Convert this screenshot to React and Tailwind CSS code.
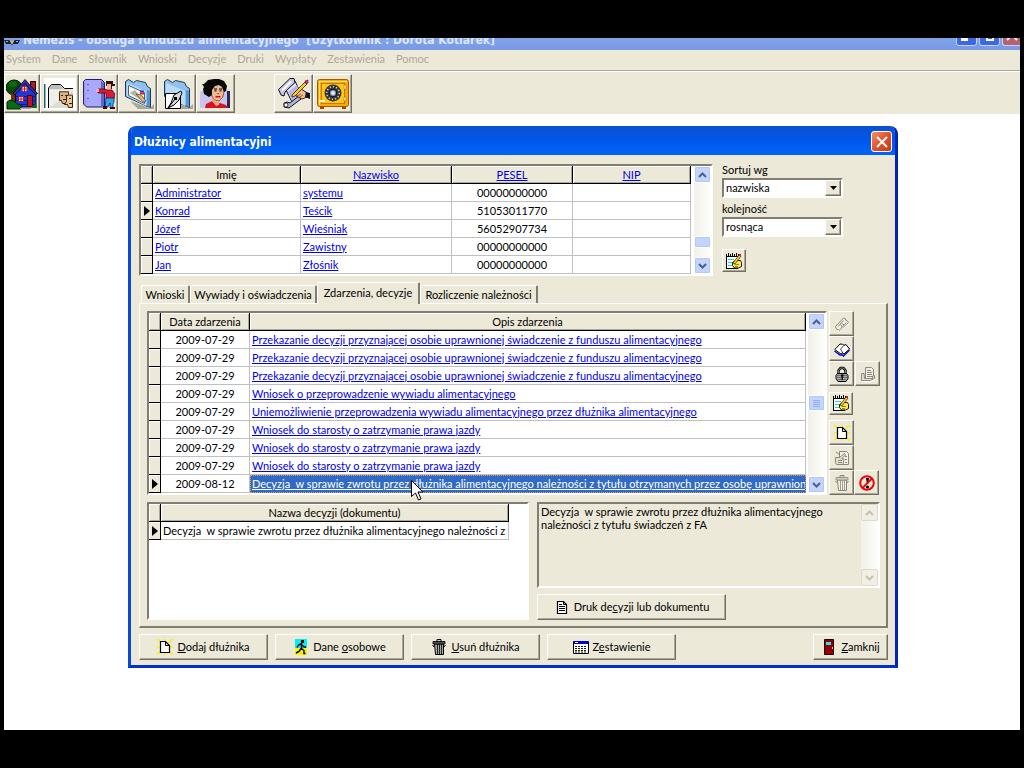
import React from "react";

const RAISED =
  "border border-t-white border-l-white border-r-[#716f64] border-b-[#716f64] shadow-[inset_-1px_-1px_0_#aca899] bg-[#ece9d8]";
const SUNKEN =
  "border-2 border-t-[#807d72] border-l-[#807d72] border-r-white border-b-white";

/* ---------- toolbar drawings (32 x 32) ---------- */

function Big({ children }) {
  return (
    <svg viewBox="0 0 32 32" className="size-8 shrink-0" aria-hidden="true">
      {children}
    </svg>
  );
}

const HouseIcon = () => (
  <Big>
    <ellipse cx="8" cy="9.500" rx="8" ry="7.500" fill="#064806" stroke="#001800" />
    <ellipse cx="7" cy="6" rx="4" ry="3" fill="#0c6a10" />
    <path d="M5 15h4v10H5z" fill="#7a2a10" />
    <path d="M24.500 3.500h5v9h-5z" fill="#c01818" stroke="#000" />
    <path d="M9.500 14.500L19 3l11 11.500V29H9.500z" fill="#1838e0" stroke="#000" />
    <path d="M10 18.500h19M10 22.500h19M10 26.500h19" stroke="#0818a0" />
    <path d="M7 15.500L19 1.500l12.500 14-2 1L19 5.500 9 17z" fill="#3a2ab0" stroke="#000" strokeWidth=".8" />
    <circle cx="18.500" cy="11" r="3" fill="#fff" stroke="#b01020" />
    <path d="M15.500 11h6M18.500 8v6" stroke="#b01020" />
    <path d="M12.500 18.500h5v5h-5z" fill="#fff" stroke="#b01020" />
    <path d="M15 18.500v5M12.500 21h5" stroke="#b01020" />
    <path d="M21.500 17.500h5v11h-5z" fill="#c01020" stroke="#400" />
    <path d="M1 24l3-2 4 1 3 3 4 1v4H1z" fill="#0a6a14" stroke="#002800" />
    <path d="M26 28l4-2 1 4h-5z" fill="#0a6a14" />
    <path d="M14 30h11v1H14z" fill="#aaa" />
  </Big>
);

const FacesIcon = () => (
  <Big>
    <path d="M0 0h32v32H0z" fill="#fff" />
    <path d="M0 6h1.500v24H0z" fill="#206080" />
    <path d="M4.500 30V10l3-3.500h9l4 4H29" fill="#e4e4e0" stroke="#000" />
    <path d="M8 7h8l3 4H5z" fill="#bdbdb8" />
    <path d="M5 12h24v18H5z" fill="#eeeeea" />
    <path d="M5 30L29 12v18z" fill="#dcdcd6" />
    <path d="M15.500 13.500h9v10l-2 2h-4l-1-3h-2z" fill="#d9b484" stroke="#3a2008" />
    <path d="M22.500 17.500h6v12h-4l-1-3h-3l2-3z" fill="#e7c49a" stroke="#3a2008" />
    <path d="M15 13h10v1.500H15zM24 16.500h5V18h-5z" fill="#806040" />
    <path d="M17 17h2v1h-2zM21 17h2v1h-2zM19 21h3v1h-3zM25 20h2v1h-2zM25 25h3v1h-3z" fill="#402010" />
  </Big>
);

const PersonIcon = () => (
  <Big>
    <path d="M.5 3.500l2-2h16l3 3V29H3.500l-3-3z" fill="#9a9af4" stroke="#202070" />
    <path d="M2 2h16v26H3z" fill="#a8a8ff" />
    <path d="M18 2l3 3v24h-3z" fill="#6464cc" />
    <path d="M4 6h2v1H4zM4 12h2v1H4zM4 20h2v1H4z" fill="#6060c0" />
    <path d="M23 3h7v3h2v2h-3v3h-5V8h-1z" fill="#301008" />
    <path d="M24 6h4v5h-4z" fill="#f0b890" />
    <path d="M15 11h7l2 1h5l3 4-1 5h-8v-6h-8z" fill="#e01838" stroke="#300" strokeWidth=".7" />
    <path d="M13 11h3v3h-3z" fill="#f0b890" />
    <path d="M23 20h8v4l-1 2v4h-3v-5l-2 4h-3z" fill="#30a8f0" stroke="#001050" strokeWidth=".7" />
    <path d="M20 28h4v3h-4zM27 29h5v2h-5z" fill="#400810" />
  </Big>
);

const folderBase = (
  <>
    <path d="M8 23l20 7 4-4v5H16z" fill="#aaa79a" />
    <path d="M3.500 3.500l3-2 5 3 3-2 9 2 2 4 3 2v19l-3-1-22-10z" fill="#8fc0ee" stroke="#203858" />
    <path d="M5 5l19 8v15L5 18z" fill="#b8dcfa" />
    <path d="M25 12l3 1v16l-3-1z" fill="#5a94d0" />
  </>
);

const PhotoFolderIcon = () => (
  <Big>
    {folderBase}
    <path d="M6.500 7.500l16 7v11l-16-8z" fill="#f4f4ee" stroke="#506078" />
    <path d="M8 15l5-3 4 5 5 2v5z" fill="#a8b8a0" />
    <path d="M14 16l5 1 5 6-3 1z" fill="#e8b080" stroke="#603010" strokeWidth=".6" />
    <path d="M18 12.500h4v2h-4z" fill="#2040d0" />
    <path d="M18 14.500h4v2h-4z" fill="#e02020" />
  </Big>
);

const PenFolderIcon = () => (
  <Big>
    {folderBase}
    <path d="M4.500 15.500h15v15h-15z" fill="#fff" stroke="#000" />
    <path d="M20 13l-7 4-3 8-3 5 6-3 5-5 3-7z" fill="#d8d8d8" stroke="#000" />
    <path d="M7 30l7-9" stroke="#000" />
    <path d="M13 19h3v3h-3z" fill="#000" />
  </Big>
);

const WomanIcon = () => (
  <Big>
    <path d="M0 14l3-2h25v18H0z" fill="#c8c4ee" />
    <path d="M27 13h3v17h-3z" fill="#282858" />
    <path d="M12 6l9-1 3 8-1 6-4 4-5-1-4-8z" fill="#f4b888" stroke="#502010" strokeWidth=".6" />
    <path d="M4 6l4-4 6-1 5 0 5 2 3 5-1 5-2 1-2-5-3-2-4 1-3 4 0 5-3 2-5-3-1-5 1-2-2-3z" fill="#080808" />
    <path d="M14 10.500h3v1h-3zM19 10.500h3v1h-3z" fill="#000" />
    <path d="M14.500 12h2v1.500h-2zM19.500 12h2v1.500h-2z" fill="#204080" />
    <path d="M17.500 15h1.500v1h-1.500z" fill="#a04020" />
    <path d="M15.500 18h5v1.500h-5z" fill="#d01020" />
    <path d="M5 30l1-4 6-3 4 4 4-2 6 2 2 3z" fill="#d81020" />
    <path d="M12 19l2 3 5 2v3l-3 1-4-5z" fill="#f0a878" />
  </Big>
);

const ScrollIcon = () => (
  <Big>
    <path d="M8 12l9-9 7 15-9 8z" fill="#e4e4fc" stroke="#101018" />
    <path d="M10 14l9-7 4 10-8 7z" fill="#b4b4ee" />
    <path d="M.5 11.500L12 .5h4l1 4L7 14l-1 4-3-1z" fill="#c4c4e8" stroke="#101018" />
    <path d="M3 12l9-9 2 1-9 9z" fill="#fff" />
    <path d="M6 25l3-1 3 1 10-8 1 4-12 9-5-1z" fill="#b4b4d8" stroke="#101018" />
    <circle cx="8" cy="27" r="2" fill="#fff" stroke="#101018" strokeWidth=".8" />
    <path d="M17 14l4-4 7 4 1 5-5 2-6-3z" fill="#f2bd93" stroke="#402010" />
    <path d="M28 14l4 1v6l-5-2z" fill="#101028" />
    <path d="M14 17L27 4l2 2-12 12-3 1z" fill="#f4d020" stroke="#302000" strokeWidth=".8" />
    <path d="M27 3l3-1v3l-2 1z" fill="#e828b8" stroke="#400030" strokeWidth=".6" />
    <path d="M19 18l4-2M20 20l5-3" stroke="#803818" strokeWidth=".8" />
  </Big>
);

const SafeIcon = () => (
  <Big>
    <path d="M3 28h4v3H3zM25 28h4v3h-4z" fill="#a04808" />
    <rect x="0.5" y="1.5" width="31" height="27" rx="2" fill="#f8a808" stroke="#a85800" />
    <path d="M2 3h28v1H3v23H2z" fill="#ffe868" />
    <rect x="4.5" y="5.5" width="23" height="20" fill="#ffc818" stroke="#c87808" />
    <path d="M27 7h2v4h-2zM27 19h2v4h-2z" fill="#fff4b0" stroke="#a06000" strokeWidth=".5" />
    <path d="M2 22h6v2H2z" fill="#fff8c8" />
    <circle cx="16" cy="15" r="8.5" fill="#383838" />
    <circle cx="16" cy="15" r="6.3" fill="none" stroke="#c8c8c8" strokeWidth="1.6" strokeDasharray="1.2 2" />
    <circle cx="16" cy="15" r="3.8" fill="#8888a8" stroke="#101010" />
    <circle cx="16" cy="15" r="2" fill="#e8e8ff" />
  </Big>
);

/* ---------- small drawings (16 x 16) ---------- */

function Small({ children }) {
  return (
    <svg viewBox="0 0 16 16" className="size-4 shrink-0" fill="none" aria-hidden="true">
      {children}
    </svg>
  );
}

const NotepadIcon = () => (
  <Small>
    <path d="M1 3h12v12H1z" fill="#fff" />
    <path d="M0 1h1v3H0zM2 0h1v3H2zM4 1h1v3H4zM6 0h1v3H6zM8 1h1v3H8zM10 0h1v3h-1zM12 1h1v3h-1z" fill="#000" />
    <path d="M0 3h13v1H0zM0 3h1v12H0zM0 15h12v1H0z" fill="#000" />
    <path d="M2 6h6v1H2zM2 9h4v1H2zM2 12h4v1H2z" fill="#20d0e0" />
    <path d="M6.500 9.500l3-2h5l1 2v4l-3 1.500h-4l-2-2.500z" fill="#ffe850" stroke="#201800" />
    <path d="M7 10l6-8 2 1-6 8z" fill="#f8d820" stroke="#302000" strokeWidth=".7" />
    <path d="M13 1h2v2h-2z" fill="#e02020" />
    <path d="M9 11.500h4M9 13.500h3" stroke="#807000" strokeWidth=".8" />
  </Small>
);

const TicketIcon = () => (
  <Small>
    <path d="M1.500 10.500l8-8.500 1.500.5.500 1.500 1.500.500 1.500 2-8.500 8-1.500-1-1.500 0-1-1.500z" fill="#f4f2e8" stroke="#8c897c" />
    <path d="M4 10.500l5.500-6M6.500 12.500l6-6M7.500 7l2.500 2M6 8.500l2.500 2" stroke="#8c897c" />
    <path d="M6 15.500l9.500-9" stroke="#fff" />
  </Small>
);

const BookIcon = () => (
  <Small>
    <path d="M.5 10l5.500 4h2.500l1 1L15.500 9" stroke="#0000c8" strokeWidth="1.400" />
    <path d="M.8 8.500L6 3l2.500.3 1.500 1L12 3.500l3.500 4.500-5.500 5-1.200-.8-2.500.3z" fill="#fff" stroke="#000" />
    <path d="M10 4.300L6.500 8l2.300 4" stroke="#000" strokeWidth=".7" />
  </Small>
);

const LockIcon = () => (
  <Small>
    <path d="M4.500 8V4.500l2-2.500h3l2 2.500V8" stroke="#000" strokeWidth="2.400" />
    <path d="M4.500 8V4.500l2-2.500h3l2 2.500V8" stroke="#c0c0c0" strokeWidth=".7" />
    <path d="M3.500 7.500h9l1.500 2v3l-2 3H4l-2-3v-3z" fill="#a8a8a8" stroke="#000" />
    <path d="M3 9.500h10M3 11.500h10M4 13.500h8" stroke="#606060" strokeWidth=".8" />
    <path d="M7 8.500h2.500v2h-.7V14H7.500v-3.500H7z" fill="#000" />
  </Small>
);

const PrintedPagesIcon = () => (
  <Small>
    <path d="M5.500 1.500h6l2 2v9h-8z" fill="#f4f2e8" stroke="#8c897c" />
    <path d="M7 4.500h4M7 6.500h5M7 8.500h5M7 10.500h5" stroke="#8c897c" />
    <path d="M4 7.500H1.500v7h9l4-2v-3l-2 .5v2.500H4.500z" fill="#e4e1d0" stroke="#8c897c" />
    <path d="M2 15.500h9l4-2" stroke="#fff" />
  </Small>
);

const NewIcon = () => (
  <Small>
    <path d="M0 0l5 4M8 0v3M16 0l-5 4M0 15l4-3M8 16v-3M16 16l-4-4M0 8h3M13 8h3" stroke="#ffee00" strokeWidth="1.6" />
    <path d="M3.500 2.500h5l4 4v7h-9z" fill="#fff" stroke="#000" strokeWidth="1.2" />
    <path d="M8.500 2.500v4h4" stroke="#000" />
  </Small>
);

const EditPageIcon = () => (
  <Small>
    <path d="M5.500 1.500h7l2 2v11h-9z" fill="#f4f2e8" stroke="#8c897c" />
    <path d="M11 6.500h2M11 9.500h2M11 12.500h2" stroke="#8c897c" />
    <path d="M1.500 7.500h4l5-4 1 1.500-4 4h2.500l-1 5.500H2.500l-1-2z" fill="#e4e1d0" stroke="#8c897c" />
    <path d="M2 2l4 3M4 10.500h4M4 12.500h4" stroke="#8c897c" />
  </Small>
);

const TrashIcon = ({ off }) => {
  const ink = off ? "#8c897c" : "#000";
  return (
    <Small>
      <path d="M3.500 5h9v10.500h-8z" fill={off ? "#f4f2e8" : "#a8a8a8"} stroke={ink} />
      <path d="M6.500 5v10M8.500 5v10M10.500 5v10" stroke={ink} strokeWidth=".8" />
      <path d="M6 .5h4V3H6z" fill="#d8d8d8" stroke={ink} />
      <path d="M2 2.500h12V5H2z" fill={off ? "#d0cdbf" : "#505050"} stroke={ink} strokeWidth=".8" />
      <path d="M1.500 6l1.500 2M14.500 6L13 8" stroke={ink} />
    </Small>
  );
};

const ForbiddenIcon = () => (
  <Small>
    <path d="M7 3h3l-1 6H8z" fill="#000" />
    <circle cx="8.500" cy="12" r="1.500" fill="#000" />
    <circle cx="8" cy="8" r="6.800" stroke="#e80808" strokeWidth="2" />
    <path d="M13 3.500L3.500 13" stroke="#e80808" strokeWidth="2" />
  </Small>
);

const DocIcon = () => (
  <Small>
    <path d="M3.500 2.500h6l3 3v9h-9z" fill="#fff" stroke="#000" strokeWidth="1.200" />
    <path d="M9.500 2.500v3h3M5 5.500h3M5 7.500h6M5 9.500h6M5 11.500h6" stroke="#000" />
  </Small>
);

const RunnerIcon = () => (
  <Small>
    <path d="M2 0h12v9H2z" fill="#00f0f8" />
    <path d="M2 9h12v7H2z" fill="#fff000" />
    <path d="M8 1h3v3H8z" fill="#000" />
    <path d="M8.500 4v5.500M8 5L5.500 6 4 8.500M9 6l2 2h2M8 9l3 2.500v3h1.500M8.500 9l-2.500 3.500-3 1.500" stroke="#000" strokeWidth="1.400" />
  </Small>
);

const SheetIcon = () => (
  <Small>
    <path d="M.5 2.500h15v12H.5z" fill="#fff" stroke="#000" />
    <path d="M1 2h14v3H1z" fill="#0000d8" />
    <path d="M2 3h3v1H2z" fill="#fff" />
    <path d="M2 7.500h12M2 9.500h12M2 11.500h12M2 13h12" stroke="#000" strokeWidth=".9" strokeDasharray="2 1" />
  </Small>
);

const DoorIcon = () => (
  <Small>
    <path d="M3.500 .5h9v15h-9z" fill="#900008" stroke="#200000" />
    <path d="M5 3h5v3H5z" fill="#30e0f0" />
    <path d="M11 8h1v2h-1z" fill="#ffe000" />
  </Small>
);

/* ---------- shared widgets ---------- */

function ArrowButton({ down, off }) {
  return (
    <button
      type="button"
      aria-label={down ? "W dół" : "W górę"}
      className={
        "flex h-[17px] w-full shrink-0 items-center justify-center rounded-[2px] border " +
        (off ? "border-[#dddacb] bg-[#f1efe4]" : "border-white bg-[#c4d4fc] shadow-[inset_0_0_0_1px_#b4c8f6]")
      }
    >
      <svg viewBox="0 0 9 6" className={"h-[6px] w-[9px] " + (down ? "rotate-180" : "")} fill="none" aria-hidden="true">
        <path d="M1 5l3.500-3.500L8 5" stroke={off ? "#c4c2b6" : "#4d6185"} strokeWidth="2" />
      </svg>
    </button>
  );
}

function ScrollBar({ thumb, off }) {
  return (
    <div className="flex w-[17px] shrink-0 flex-col bg-linear-to-r from-[#f1f0ea] to-[#fefefb]">
      <ArrowButton off={off} />
      <div className={"min-h-0 " + (thumb === "low" ? "grow-[6]" : "grow")} />
      {thumb === "low" && <div className="h-3 rounded-[2px] border border-white bg-[#c4d4fc] shadow-[inset_0_0_0_1px_#b4c8f6]" />}
      {thumb === "mid" && (
        <div className="flex h-4 flex-col items-center justify-center gap-px rounded-[2px] border border-white bg-[#c4d4fc] shadow-[inset_0_0_0_1px_#b4c8f6]">
          <i className="h-px w-[7px] bg-[#8cb0f8]" />
          <i className="h-px w-[7px] bg-[#8cb0f8]" />
          <i className="h-px w-[7px] bg-[#8cb0f8]" />
          <i className="h-px w-[7px] bg-[#8cb0f8]" />
        </div>
      )}
      <div className="min-h-0 grow" />
      <ArrowButton down off={off} />
    </div>
  );
}

function Th({ children, link }) {
  return (
    <th
      scope="col"
      className="h-[18px] overflow-hidden border-r border-b border-black bg-[#ece9d8] p-0 text-center font-normal whitespace-nowrap shadow-[inset_1px_1px_0_#fff,inset_-1px_-1px_0_#aca899]"
    >
      {link ? (
        <a href="#" className="text-[#0000e8] underline">
          {children}
        </a>
      ) : (
        children
      )}
    </th>
  );
}

function Marker({ on }) {
  return (
    <td className="h-[18px] border-r border-b border-black bg-[#ece9d8] p-0 shadow-[inset_1px_1px_0_#fff]">
      {on && (
        <svg viewBox="0 0 6 10" className="mx-auto block h-[10px] w-[6px]" aria-hidden="true">
          <path d="M0 0l6 5-6 5z" fill="#000" />
        </svg>
      )}
    </td>
  );
}

const CELL = "h-[18px] overflow-hidden border-r border-b border-[#c0c0c0] px-[2px] py-0 whitespace-nowrap";

const people = [
  ["Administrator", "systemu", "00000000000"],
  ["Konrad", "Teścik", "51053011770"],
  ["Józef", "Wieśniak", "56052907734"],
  ["Piotr", "Zawistny", "00000000000"],
  ["Jan", "Złośnik", "00000000000"],
];

function PeopleGrid() {
  return (
    <div className={"flex min-w-0 grow bg-white " + SUNKEN}>
      <div className="min-w-0 grow pr-[3px]">
        <table className="w-full table-fixed border-separate border-spacing-0">
          <colgroup>
            <col className="w-3" />
            <col className="w-[148px]" />
            <col className="w-[151px]" />
            <col className="w-[121px]" />
            <col />
          </colgroup>
          <thead>
            <tr>
              <Th />
              <Th>Imię</Th>
              <Th link>Nazwisko</Th>
              <Th link>PESEL</Th>
              <Th link>NIP</Th>
            </tr>
          </thead>
          <tbody>
            {people.map(([first, last, pesel], i) => (
              <tr key={last}>
                <Marker on={i === 1} />
                <td className={CELL}>
                  <a href="#" className="text-[#0000e8] underline">{first}</a>
                </td>
                <td className={CELL}>
                  <a href="#" className="text-[#0000e8] underline">{last}</a>
                </td>
                <td className={CELL + " text-center"}>{pesel}</td>
                <td className={CELL} />
              </tr>
            ))}
          </tbody>
        </table>
      </div>
      <ScrollBar thumb="low" />
    </div>
  );
}

const transfer = "Przekazanie decyzji przyznającej osobie uprawnionej świadczenie z funduszu alimentacyjnego";
const licence = "Wniosek do starosty o zatrzymanie prawa jazdy";
const decision =
  "Decyzja  w sprawie zwrotu przez dłużnika alimentacyjnego należności z tytułu otrzymanych przez osobę uprawnioną świadczeń z funduszu alimentacyjnego";
const events = [
  ["2009-07-29", transfer],
  ["2009-07-29", transfer],
  ["2009-07-29", transfer],
  ["2009-07-29", "Wniosek o przeprowadzenie wywiadu alimentacyjnego"],
  ["2009-07-29", "Uniemożliwienie przeprowadzenia wywiadu alimentacyjnego przez dłużnika alimentacyjnego"],
  ["2009-07-29", licence],
  ["2009-07-29", licence],
  ["2009-07-29", licence],
  ["2009-08-12", decision],
];

function Pointer() {
  return (
    <svg viewBox="0 0 13 21" className="absolute top-[5px] left-[161px] z-10 h-[21px] w-[13px]" aria-hidden="true">
      <path d="M.5 .5v16l4-3.500 3 7 2.500-1-3-7h5z" fill="#fff" stroke="#000" />
    </svg>
  );
}

function EventsGrid() {
  return (
    <div className={"flex min-w-0 grow bg-white " + SUNKEN}>
      <div className="min-w-0 grow pr-[2px]">
        <table className="w-full table-fixed border-separate border-spacing-0">
          <colgroup>
            <col className="w-3" />
            <col className="w-[89px]" />
            <col />
          </colgroup>
          <thead>
            <tr>
              <Th />
              <Th>Data zdarzenia</Th>
              <Th>Opis zdarzenia</Th>
            </tr>
          </thead>
          <tbody>
            {events.map(([date, text], i) => {
              const on = i === events.length - 1;
              return (
                <tr key={i}>
                  <Marker on={on} />
                  <td className={CELL + " text-center"}>{date}</td>
                  {on ? (
                    <td className="h-[18px] p-0">
                      <div className="relative">
                        <div className="h-[18px] overflow-hidden border border-dotted border-[#e0a050] bg-[#316ac5] px-px leading-4 whitespace-pre">
                          <a href="#" className="text-white underline">{text}</a>
                        </div>
                        <Pointer />
                      </div>
                    </td>
                  ) : (
                    <td className={CELL}>
                      <a href="#" className="text-[#0000e8] underline">{text}</a>
                    </td>
                  )}
                </tr>
              );
            })}
          </tbody>
        </table>
      </div>
      <ScrollBar thumb="mid" />
    </div>
  );
}

function ToolButton({ label, children, small }) {
  return (
    <button
      type="button"
      aria-label={label}
      className={"flex shrink-0 items-center justify-center " + (small ? "h-[23px] w-6 " : "size-[25px] ") + RAISED}
    >
      {children}
    </button>
  );
}

function EventTools() {
  return (
    <div className="flex w-[51px] shrink-0 flex-col justify-between">
      <div>
        <ToolButton label="Bilet"><TicketIcon /></ToolButton>
        <ToolButton label="Książka"><BookIcon /></ToolButton>
        <div className="flex gap-px">
          <ToolButton label="Blokada"><LockIcon /></ToolButton>
          <ToolButton label="Wydruki"><PrintedPagesIcon /></ToolButton>
        </div>
      </div>
      <ToolButton label="Notatka" small><NotepadIcon /></ToolButton>
      <div>
        <ToolButton label="Nowe"><NewIcon /></ToolButton>
        <ToolButton label="Edycja"><EditPageIcon /></ToolButton>
        <div className="flex">
          <ToolButton label="Usuń"><TrashIcon off /></ToolButton>
          <ToolButton label="Anuluj"><ForbiddenIcon /></ToolButton>
        </div>
      </div>
    </div>
  );
}

function PushButton({ icon, children, className }) {
  return (
    <button type="button" className={"flex h-[26px] items-center justify-center gap-1 whitespace-nowrap " + RAISED + " " + className}>
      {icon}
      <span>{children}</span>
    </button>
  );
}

function Choice({ id, label, value }) {
  return (
    <div>
      <label htmlFor={id} className="block h-[14px] leading-[12px]">{label}</label>
      <div className={"relative h-5 bg-white " + SUNKEN}>
        <select id={id} defaultValue={value} className="h-4 w-full appearance-none bg-white pl-[2px] text-[11px] leading-4 outline-none">
          <option>{value}</option>
        </select>
        <span className={"pointer-events-none absolute top-0 right-0 flex h-4 w-4 items-center justify-center " + RAISED}>
          <svg viewBox="0 0 7 4" className="h-1 w-[7px]" aria-hidden="true">
            <path d="M0 0h7L3.500 4z" fill="#000" />
          </svg>
        </span>
      </div>
    </div>
  );
}

function Tab({ children, active, className }) {
  return (
    <button
      type="button"
      role="tab"
      aria-selected={!!active}
      className={
        "flex items-center justify-center rounded-t-[2px] border-t border-l border-white border-r-2 border-r-[#807d72] bg-[#ece9d8] whitespace-nowrap " +
        (active ? "relative -mb-px h-[22px] pb-[2px] " : "h-[18px] ") +
        className
      }
    >
      {children}
    </button>
  );
}

function Dialog() {
  return (
    <section
      aria-label="Dłużnicy alimentacyjni"
      className="mt-3 mr-[122px] ml-31 overflow-hidden rounded-t-lg border-[3px] border-t-0 border-[#0a48dc] border-r-[#0024b8] border-b-[#0030c8] bg-[#ece9d8] font-[Lato,sans-serif] text-[11px] leading-4 text-black"
    >
      <header className="-mx-[3px] flex h-[29px] items-center justify-between bg-linear-to-b from-[#0a50d0] via-[#0058ea] to-[#0064fa] px-[6px] pt-[2px]">
        <h1 className="font-['DejaVu_Sans_Condensed','DejaVu_Sans',sans-serif] text-[12px] leading-5 font-bold text-white">Dłużnicy alimentacyjni</h1>
        <button type="button" aria-label="Zamknij okno" className="flex size-[21px] items-center justify-center rounded-[3px] border border-white bg-linear-to-br from-[#f0906c] via-[#e0502c] to-[#c83810]">
          <svg viewBox="0 0 12 12" className="size-3" aria-hidden="true">
            <path d="M1 1l10 10M11 1L1 11" stroke="#fff" strokeWidth="2" />
          </svg>
        </button>
      </header>

      <div className="flex flex-col pt-[9px] pr-[7px] pb-[5px] pl-2">
        <div className="flex items-start gap-[9px]">
          <PeopleGrid />
          <div className="mr-[45px] flex w-[121px] shrink-0 flex-col gap-[5px]">
            <Choice id="sort" label="Sortuj wg" value="nazwiska" />
            <Choice id="order" label="kolejność" value="rosnąca" />
            <div className="pt-[7px]">
              <ToolButton label="Notatnik" small><NotepadIcon /></ToolButton>
            </div>
          </div>
        </div>

        <div role="tablist" className="mt-[6px] flex items-end pl-[2px]">
          <Tab className="w-[49px]">Wnioski</Tab>
          <Tab className="w-[127px]">Wywiady i oświadczenia</Tab>
          <Tab active className="w-[103px]">Zdarzenia, decyzje</Tab>
          <Tab className="w-[118px]">Rozliczenie należności</Tab>
        </div>

        <div role="tabpanel" className="flex flex-col gap-[7px] border border-t-white border-l-white border-r-2 border-b-2 border-r-[#807d72] border-b-[#807d72] pt-[7px] pr-[6px] pb-[6px] pl-[7px]">
          <div className="flex gap-[2px]">
            <EventsGrid />
            <EventTools />
          </div>
          <div className="flex gap-2">
            <div className={"min-h-[118px] min-w-0 grow bg-white " + SUNKEN}>
              <div className="pr-[18px]">
                <table className="w-full table-fixed border-separate border-spacing-0">
                  <colgroup>
                    <col className="w-3" />
                    <col />
                  </colgroup>
                  <thead>
                    <tr>
                      <Th />
                      <Th>Nazwa decyzji (dokumentu)</Th>
                    </tr>
                  </thead>
                  <tbody>
                    <tr>
                      <Marker on />
                      <td className={CELL + " whitespace-pre"}>{decision}</td>
                    </tr>
                  </tbody>
                </table>
              </div>
            </div>
            <div className="flex w-[343px] shrink-0 flex-col gap-[6px]">
              <div className={"flex h-[86px] " + SUNKEN}>
                <textarea
                  readOnly
                  aria-label="Opis decyzji"
                  className="min-w-0 grow resize-none overflow-hidden bg-transparent px-[2px] pt-px text-[11px] leading-[13px] outline-none"
                  defaultValue={"Decyzja  w sprawie zwrotu przez dłużnika alimentacyjnego\nnależności z tytułu świadczeń z FA"}
                />
                <ScrollBar off />
              </div>
              <PushButton className="w-[189px]" icon={<DocIcon />}>
                Druk de<u>c</u>yzji lub dokumentu
              </PushButton>
            </div>
          </div>
        </div>

        <div className="mt-[6px] flex gap-[7px]">
          <PushButton className="w-[129px]" icon={<NewIcon />}><u>D</u>odaj dłużnika</PushButton>
          <PushButton className="w-[129px]" icon={<RunnerIcon />}>Dane <u>o</u>sobowe</PushButton>
          <PushButton className="w-[129px]" icon={<TrashIcon />}><u>U</u>suń dłużnika</PushButton>
          <PushButton className="w-[129px]" icon={<SheetIcon />}>Z<u>e</u>stawienie</PushButton>
          <PushButton className="ml-auto w-[75px]" icon={<DoorIcon />}><u>Z</u>amknij</PushButton>
        </div>
      </div>
    </section>
  );
}

const menu = ["System", "Dane", "Słownik", "Wnioski", "Decyzje", "Druki", "Wypłaty", "Zestawienia", "Pomoc"];
const TOOL = "flex h-[39px] items-center justify-center " + RAISED;

export default function App() {
  return (
    <div className="min-h-screen bg-black px-1 py-[38px]">
      <div className="flex min-h-[calc(100vh-76px)] flex-col bg-white">
        <header className="flex h-3 items-end justify-between overflow-hidden bg-linear-to-b from-[#80a4ea] to-[#7a98e2]">
          <div className="flex items-end gap-[3px]">
            <svg viewBox="0 0 16 8" className="mb-1 h-2 w-4" aria-hidden="true">
              <path d="M0 2h5l3 3 3-3h5l-2 4H9L8 8 7 6H2z" fill="#182038" />
              <path d="M6 3h4l-2 4z" fill="#f0c020" />
              <path d="M2 3h2v1H2zM12 3h2v1h-2z" fill="#80c0f0" />
            </svg>
            <span className="font-['DejaVu_Sans_Condensed','DejaVu_Sans',sans-serif] text-[12px] leading-5 font-bold whitespace-pre text-[#dce6fa]">
              {"Nemezis - obsługa funduszu alimentacyjnego  [Użytkownik : Dorota Kotlarek]"}
            </span>
          </div>
          <div className="flex h-full items-end gap-[2px] overflow-hidden pb-1">
            <button type="button" aria-label="Minimalizuj" className="flex h-[21px] w-[21px] items-end rounded-[3px] border border-[#c4d4f8] bg-[#3c68e4] pb-1 pl-1">
              <i className="h-[3px] w-[7px] bg-white" />
            </button>
            <button type="button" aria-label="Maksymalizuj" className="flex h-[21px] w-[21px] items-end justify-center rounded-[3px] border border-[#c4d4f8] bg-[#3c68e4] pb-1">
              <i className="h-2 w-2 border-2 border-white" />
            </button>
            <button type="button" aria-label="Zamknij program" className="flex h-[21px] w-[18px] items-end justify-center rounded-l-[3px] border border-r-0 border-[#c4d4f8] bg-[#b86070] pb-1">
              <svg viewBox="0 0 12 12" className="size-3" aria-hidden="true">
                <path d="M1 1l10 10M11 1L1 11" stroke="#fff" strokeWidth="2" />
              </svg>
            </button>
          </div>
        </header>

        <nav className="flex h-5 items-center gap-[11px] bg-[#ece9d8] pb-[2px] pl-[2px] font-[Lato,sans-serif] text-[11px] text-[#aca899]">
          {menu.map((m) => (
            <a key={m} href="#">{m}</a>
          ))}
        </nav>

        <div className="flex border-t border-[#aca899] bg-[#ece9d8] pt-[3px] pb-px shadow-[inset_0_1px_0_#fff]">
          <button type="button" aria-label="Dom" className={TOOL + " w-9"}><HouseIcon /></button>
          <button type="button" aria-label="Osoby" className={TOOL + " w-[39px]"}><FacesIcon /></button>
          <button type="button" aria-label="Wyjście" className={TOOL + " w-[39px]"}><PersonIcon /></button>
          <button type="button" aria-label="Wnioski" className={TOOL + " w-[39px]"}><PhotoFolderIcon /></button>
          <button type="button" aria-label="Decyzje" className={TOOL + " w-[39px]"}><PenFolderIcon /></button>
          <button type="button" aria-label="Dłużnicy" className={TOOL + " w-[39px]"}><WomanIcon /></button>
          <button type="button" aria-label="Druki" className={TOOL + " ml-[39px] w-[39px]"}><ScrollIcon /></button>
          <button type="button" aria-label="Wypłaty" className={TOOL + " w-[39px]"}><SafeIcon /></button>
        </div>

        <Dialog />
      </div>
    </div>
  );
}
